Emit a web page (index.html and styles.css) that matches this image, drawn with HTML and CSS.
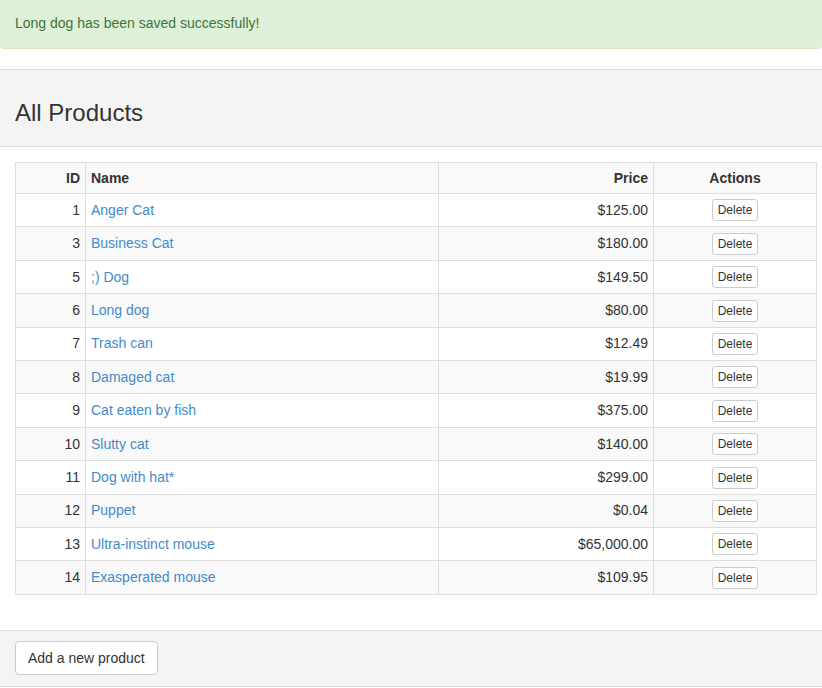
FILE: index.html
```html
<!DOCTYPE html>
<html>
<head>
<meta charset="utf-8">
<link rel="stylesheet" href="styles.css">
</head>
<body>
<div class="alert">Long dog has been saved successfully!</div>
<div class="panel">
  <div class="panel-heading"><h2 class="panel-title">All Products</h2></div>
  <div class="panel-body">
    <table class="products">
      <colgroup>
        <col class="c-id"><col class="c-name"><col class="c-price"><col class="c-actions">
      </colgroup>
      <thead>
        <tr><th class="num">ID</th><th>Name</th><th class="num">Price</th><th class="ctr">Actions</th></tr>
      </thead>
      <tbody>
        <tr><td class="num">1</td><td><a href="#">Anger Cat</a></td><td class="num">$125.00</td><td class="ctr"><button class="btn-xs">Delete</button></td></tr>
        <tr><td class="num">3</td><td><a href="#">Business Cat</a></td><td class="num">$180.00</td><td class="ctr"><button class="btn-xs">Delete</button></td></tr>
        <tr><td class="num">5</td><td><a href="#">;) Dog</a></td><td class="num">$149.50</td><td class="ctr"><button class="btn-xs">Delete</button></td></tr>
        <tr><td class="num">6</td><td><a href="#">Long dog</a></td><td class="num">$80.00</td><td class="ctr"><button class="btn-xs">Delete</button></td></tr>
        <tr><td class="num">7</td><td><a href="#">Trash can</a></td><td class="num">$12.49</td><td class="ctr"><button class="btn-xs">Delete</button></td></tr>
        <tr><td class="num">8</td><td><a href="#">Damaged cat</a></td><td class="num">$19.99</td><td class="ctr"><button class="btn-xs">Delete</button></td></tr>
        <tr><td class="num">9</td><td><a href="#">Cat eaten by fish</a></td><td class="num">$375.00</td><td class="ctr"><button class="btn-xs">Delete</button></td></tr>
        <tr><td class="num">10</td><td><a href="#">Slutty cat</a></td><td class="num">$140.00</td><td class="ctr"><button class="btn-xs">Delete</button></td></tr>
        <tr><td class="num">11</td><td><a href="#">Dog with hat*</a></td><td class="num">$299.00</td><td class="ctr"><button class="btn-xs">Delete</button></td></tr>
        <tr><td class="num">12</td><td><a href="#">Puppet</a></td><td class="num">$0.04</td><td class="ctr"><button class="btn-xs">Delete</button></td></tr>
        <tr><td class="num">13</td><td><a href="#">Ultra-instinct mouse</a></td><td class="num">$65,000.00</td><td class="ctr"><button class="btn-xs">Delete</button></td></tr>
        <tr><td class="num">14</td><td><a href="#">Exasperated mouse</a></td><td class="num">$109.95</td><td class="ctr"><button class="btn-xs">Delete</button></td></tr>
      </tbody>
    </table>
  </div>
  <div class="panel-footer"><button class="btn">Add a new product</button></div>
</div>
</body>
</html>
```
FILE: styles.css
```css
html, body {
  margin: 0;
  padding: 0;
  background: #fff;
}
body {
  font-family: "Liberation Sans", Arial, Helvetica, sans-serif;
  font-size: 14px;
  line-height: 20px;
  color: #333;
  overflow: hidden;
}
.alert {
  background: #dff0d8;
  color: #3c763d;
  border-bottom: 1px solid #d6e9c6;
  border-radius: 0 0 4px 4px;
  padding: 13px 15px 15px;
  line-height: 20px;
  margin-bottom: 20px;
}
.panel {
  border-top: 1px solid #ddd;
  border-bottom: 1px solid #ddd;
}
.panel-heading {
  background: #f4f4f4;
  border-bottom: 1px solid #ddd;
  padding: 30px 15px 20px;
}
.panel-title {
  margin: 0;
  font-size: 24px;
  font-weight: normal;
  line-height: 26px;
  color: #333;
}
.panel-body {
  padding: 15px 15px 15px;
}
.products {
  width: 801px;
  table-layout: fixed;
  border-collapse: collapse;
  margin-bottom: 20px;
}
.c-id { width: 70px; }
.c-name { width: 353px; }
.c-price { width: 215px; }
.c-actions { width: 163px; }
.products th,
.products td {
  border: 1px solid #ddd;
  padding: 0 5px;
  text-align: left;
  vertical-align: middle;
}
.products td {
  padding-bottom: 1px;
}
.products thead tr {
  height: 31px;
  background: #f9f9f9;
}
.products th {
  font-weight: bold;
}
.products tbody tr {
  height: 33.42px;
}
.products tbody tr:nth-child(even) {
  background: #f9f9f9;
}
.products .num { text-align: right; }
.products .ctr { text-align: center; }
.products td.ctr { padding-bottom: 0; }
.products a {
  color: #428bca;
  text-decoration: none;
}
.btn-xs {
  font-family: "Liberation Sans", Arial, Helvetica, sans-serif;
  font-size: 12px;
  line-height: 18px;
  padding: 1px 5px;
  color: #333;
  background: #fff;
  border: 1px solid #ccc;
  border-radius: 3px;
  vertical-align: middle;
}
.panel-footer {
  background: #f4f4f4;
  border-top: 1px solid #ddd;
  padding: 10px 15px 11px;
}
.btn {
  font-family: "Liberation Sans", Arial, Helvetica, sans-serif;
  font-size: 14px;
  line-height: 20px;
  padding: 6px 12px;
  color: #333;
  background: #fff;
  border: 1px solid #ccc;
  border-radius: 4px;
  display: block;
}
```
